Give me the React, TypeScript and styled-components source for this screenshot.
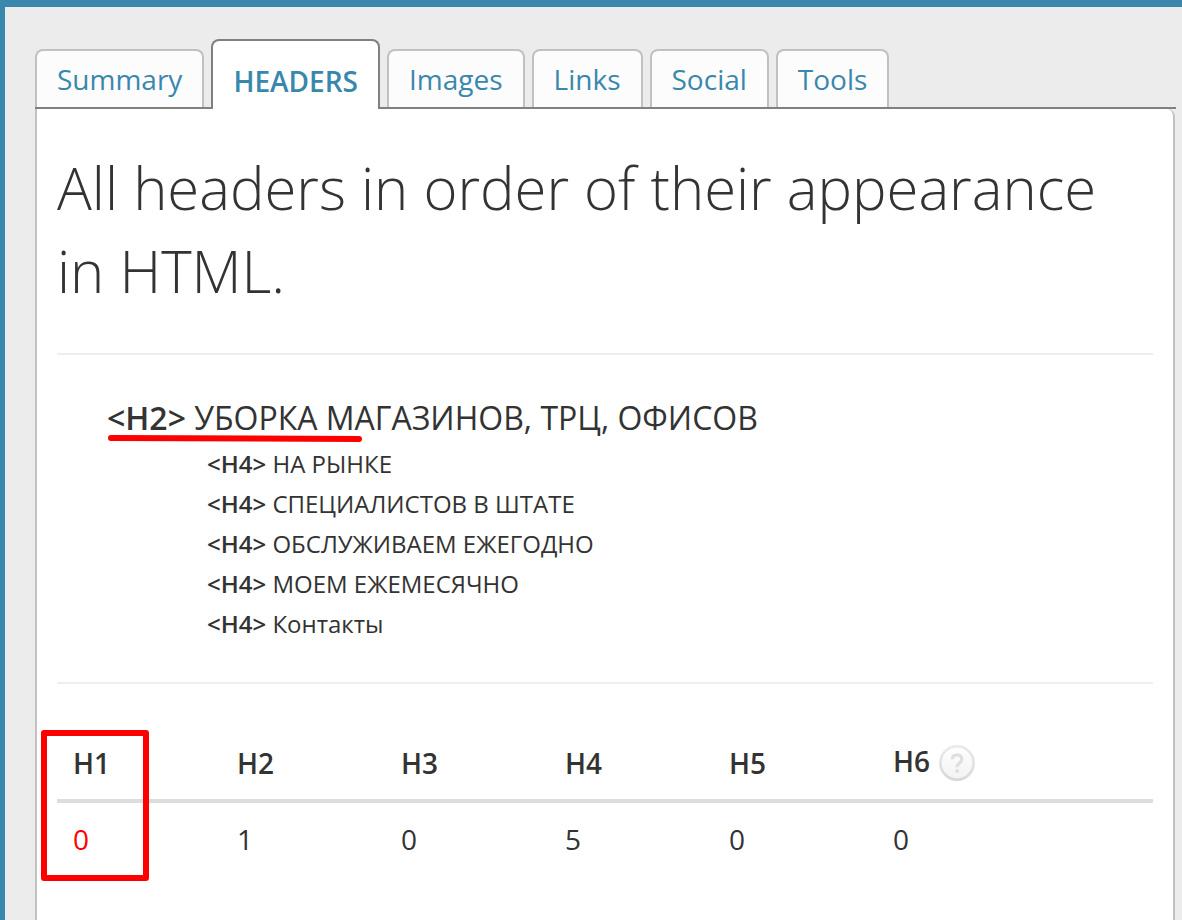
import React from "react";
import styled, { createGlobalStyle, css } from "styled-components";

const GlobalStyle = createGlobalStyle`
  *, *::before, *::after { box-sizing: border-box; }
  body {
    margin: 0;
    background: #ececec;
    color: #333;
    font-family: "Open Sans", "Noto Sans", sans-serif;
    font-size: 28px;
    line-height: 40px;
  }
`;

const Page = styled.div`
  display: flex;
  flex-direction: column;
  min-height: 100vh;
  padding: 32px 6px 0 30px;
  border-top: 7px solid #3a87ad;
  border-left: 5px solid #3a87ad;
`;

const TabBar = styled.nav`
  display: flex;
  align-items: flex-end;
  gap: 7px;
  border-bottom: 2px solid #808080;
`;

const Tab = styled.a<{ $active?: boolean }>`
  padding: 8px 20px;
  border: 2px solid #c1c1c1;
  border-bottom: 0;
  border-radius: 8px 8px 0 0;
  background: #fcfcfc;
  color: #3a87ad;
  text-decoration: none;
  ${({ $active }) =>
    $active &&
    css`
      margin-bottom: -2px;
      padding: 20px 20px 8px;
      border-color: #808080;
      background: #fff;
      font-weight: 600;
      text-transform: uppercase;
    `}
`;

const Panel = styled.main`
  flex: 1;
  margin-right: 1px;
  padding: 37px 20px;
  border: solid #c1c1c1;
  border-width: 0 2px;
  border-top-right-radius: 8px;
  background: #fff;
`;

const Title = styled.h1`
  margin: 0;
  padding-bottom: 3px;
  font-size: 58px;
  font-weight: 300;
  line-height: 83px;
`;

const Divider = styled.hr`
  margin: 38px 0 37px;
  border: 0;
  border-top: 2px solid #eee;
`;

const Outline = styled.ul`
  margin: 0;
  padding: 0;
  list-style: none;
`;

const OutlineItem = styled.li<{ $level: 2 | 4 }>`
  position: relative;
  padding-left: ${({ $level }) => ($level === 2 ? 50 : 150)}px;
  font-size: ${({ $level }) => ($level === 2 ? 32 : 24)}px;
  line-height: ${({ $level }) => ($level === 2 ? 52 : 40)}px;
`;

const Tag = styled.b`
  font-weight: 600;
`;

const Underline = styled.svg`
  position: absolute;
  left: 50px;
  top: 42px;
  width: 256px;
  height: 10px;
`;

const TableArea = styled.div`
  position: relative;
  padding-top: 4px;
`;

const CountTable = styled.table`
  width: 100%;
  table-layout: fixed;
  border-collapse: collapse;
`;

const HeadCell = styled.th`
  width: 164px;
  padding: 16px 16px 14px;
  border-bottom: 4px solid #ddd;
  font-weight: 600;
  text-align: left;
  vertical-align: middle;
  white-space: nowrap;
  &:last-child { width: auto; }
`;

const CountCell = styled.td<{ $missing?: boolean }>`
  padding: 16px;
  color: ${({ $missing }) => ($missing ? "#f00" : "inherit")};
`;

const HelpButton = styled.button`
  width: 36px;
  height: 36px;
  margin: 0 0 4px 9px;
  padding: 0;
  border: 0;
  background: none;
  vertical-align: middle;
  svg { display: block; }
`;

const Highlight = styled.div`
  position: absolute;
  left: -16px;
  top: 9px;
  width: 108px;
  height: 151px;
  border: 6px solid #f00;
  border-radius: 3px;
`;

const tabs = ["Summary", "Headers", "Images", "Links", "Social", "Tools"];

const headers: { level: 2 | 4; text: string }[] = [
  { level: 2, text: "УБОРКА МАГАЗИНОВ, ТРЦ, ОФИСОВ" },
  { level: 4, text: "НА РЫНКЕ" },
  { level: 4, text: "СПЕЦИАЛИСТОВ В ШТАТЕ" },
  { level: 4, text: "ОБСЛУЖИВАЕМ ЕЖЕГОДНО" },
  { level: 4, text: "МОЕМ ЕЖЕМЕСЯЧНО" },
  { level: 4, text: "Контакты" },
];

const counts = [0, 1, 0, 5, 0, 0];

function HelpIcon() {
  return (
    <svg width="36" height="36" viewBox="0 0 36 36" fill="none" aria-hidden="true">
      <defs>
        <linearGradient id="rim" x1="0" y1="0" x2="0" y2="1">
          <stop offset="0" stopColor="#ebebeb" />
          <stop offset="1" stopColor="#d8d8d8" />
        </linearGradient>
        <linearGradient id="face" x1="0" y1="0" x2="0" y2="1">
          <stop offset="0" stopColor="#fff" />
          <stop offset="1" stopColor="#f2f2f2" />
        </linearGradient>
      </defs>
      <circle cx="18" cy="18" r="16.6" fill="url(#face)" stroke="url(#rim)" strokeWidth="2.6" />
      <path
        d="M13.4 14.2c0-2.8 1.9-4.2 4.7-4.2 2.8 0 4.7 1.6 4.7 4.2 0 3.6-4.7 3.8-4.7 8"
        stroke="#dfdfdf"
        strokeWidth="3.2"
      />
      <circle cx="18.1" cy="26.1" r="2" fill="#dfdfdf" />
    </svg>
  );
}

export default function App() {
  return (
    <>
      <GlobalStyle />
      <Page>
        <TabBar>
          {tabs.map((name) => (
            <Tab key={name} href={`#${name.toLowerCase()}`} $active={name === "Headers"}>
              {name}
            </Tab>
          ))}
        </TabBar>
        <Panel>
          <Title>All headers in order of their appearance in HTML.</Title>
          <Divider />
          <Outline>
            {headers.map(({ level, text }) => (
              <OutlineItem key={text} $level={level}>
                <Tag>{`<H${level}>`}</Tag> {text}
                {level === 2 && (
                  <Underline viewBox="0 0 256 10" aria-hidden="true">
                    <path d="M4 4L252 5" stroke="#f00" strokeWidth="6" strokeLinecap="round" />
                  </Underline>
                )}
              </OutlineItem>
            ))}
          </Outline>
          <Divider />
          <TableArea>
            <CountTable>
              <thead>
                <tr>
                  {counts.map((_, i) => (
                    <HeadCell key={i} scope="col">
                      {`H${i + 1}`}
                      {i === 5 && (
                        <HelpButton type="button" aria-label="Help">
                          <HelpIcon />
                        </HelpButton>
                      )}
                    </HeadCell>
                  ))}
                </tr>
              </thead>
              <tbody>
                <tr>
                  {counts.map((count, i) => (
                    <CountCell key={i} $missing={i === 0}>
                      {count}
                    </CountCell>
                  ))}
                </tr>
              </tbody>
            </CountTable>
            <Highlight />
          </TableArea>
        </Panel>
      </Page>
    </>
  );
}
